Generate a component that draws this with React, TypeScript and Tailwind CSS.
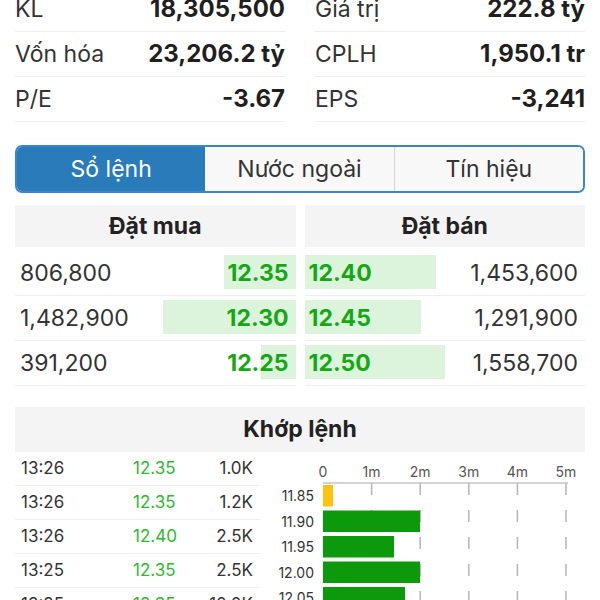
import React from "react";

const font = { fontFamily: "Inter, 'Noto Sans', sans-serif" };

const stats: [string, string][] = [
  ["KL", "18,305,500"],
  ["Giá trị", "222.8 tỷ"],
  ["Vốn hóa", "23,206.2 tỷ"],
  ["CPLH", "1,950.1 tr"],
  ["P/E", "-3.67"],
  ["EPS", "-3,241"],
];

const buys = [
  { vol: "806,800", price: "12.35", w: 72 },
  { vol: "1,482,900", price: "12.30", w: 133 },
  { vol: "391,200", price: "12.25", w: 35 },
];
const sells = [
  { vol: "1,453,600", price: "12.40", w: 131 },
  { vol: "1,291,900", price: "12.45", w: 116 },
  { vol: "1,558,700", price: "12.50", w: 140 },
];

const trades = [
  ["13:26", "12.35", "1.0K"],
  ["13:26", "12.35", "1.2K"],
  ["13:26", "12.40", "2.5K"],
  ["13:25", "12.35", "2.5K"],
  ["13:25", "12.35", "10.0K"],
];

const bars = [
  { label: "11.85", w: 10, color: "#ffc20e" },
  { label: "11.90", w: 97, color: "#0c990c" },
  { label: "11.95", w: 71, color: "#0c990c" },
  { label: "12.00", w: 97, color: "#0c990c" },
  { label: "12.05", w: 82, color: "#0c990c" },
];

function Chart() {
  const x0 = 63;
  const step = 48.6;
  const ticks = [0, 1, 2, 3, 4, 5];
  return (
    <svg width="325" height="148" viewBox="0 0 325 148">
      {ticks.map((t) => (
        <text
          key={t}
          x={x0 + t * step}
          y={25}
          textAnchor="middle"
          fontSize="14"
          fill="#555"
          fontFamily="Inter, sans-serif"
        >
          {t === 0 ? "0" : `${t}m`}
        </text>
      ))}
      {ticks.slice(1).map((t) => (
        <line
          key={t}
          x1={x0 + t * step}
          x2={x0 + t * step}
          y1={31}
          y2={148}
          stroke="#b5b5b5"
          strokeWidth="1.5"
          strokeDasharray="12 15"
        />
      ))}
      <line x1={x0} x2={x0 + 5 * step + 2} y1={31} y2={31} stroke="#c4c4c4" strokeWidth="1.5" />
      {bars.map((b, i) => {
        const top = 33 + i * 25.5;
        return (
          <g key={b.label}>
            <text
              x={54}
              y={top + 16}
              textAnchor="end"
              fontSize="14"
              fill="#333"
              fontFamily="Inter, sans-serif"
            >
              {b.label}
            </text>
            <rect x={x0} y={top} width={b.w} height={21.5} fill={b.color} />
          </g>
        );
      })}
    </svg>
  );
}

export default function App() {
  return (
    <div className="w-[600px] h-[600px] overflow-hidden bg-white text-[#222]" style={font}>
      <div className="-mt-[13px] grid grid-cols-2 gap-x-[30px] px-[15px]">
        {stats.map(([k, v]) => (
          <div key={k} className="flex h-[45px] items-center justify-between border-b border-[#eeeeee]">
            <span className="text-[23px] text-[#333]">{k}</span>
            <span className="text-[24px] font-bold text-[#1f1f1f]">{v}</span>
          </div>
        ))}
      </div>

      <div className="mx-[15px] mt-[23px] flex h-[48px] overflow-hidden rounded-[7px] border-2 border-[#3a86c6] text-[23px]">
        <div className="flex flex-1 items-center justify-center bg-[#2a7bb9] text-white">Sổ lệnh</div>
        <div className="flex flex-1 items-center justify-center bg-[#f8f8f8] text-[#333]">Nước ngoài</div>
        <div className="flex flex-1 items-center justify-center border-l border-[#d6d6d6] bg-[#f8f8f8] text-[#333]">Tín hiệu</div>
      </div>

      <div className="mt-[12px] grid grid-cols-2 gap-[9px] px-[15px]">
        <div>
          <div className="mb-[4px] flex h-[42px] items-center justify-center bg-[#f4f4f4] text-[23px] font-bold text-[#222]">
            Đặt mua
          </div>
          {buys.map((r) => (
            <div key={r.vol} className="relative flex h-[45px] items-center justify-between border-b border-[#eeeeee] pl-[5px] pr-[7px]">
              <div className="absolute right-0 top-[4px] h-[34px] bg-[#dcf3dc]" style={{ width: r.w }} />
              <span className="relative text-[23px] text-[#333]">{r.vol}</span>
              <span className="relative text-[23px] font-bold text-[#15a815]">{r.price}</span>
            </div>
          ))}
        </div>
        <div>
          <div className="mb-[4px] flex h-[42px] items-center justify-center bg-[#f4f4f4] text-[23px] font-bold text-[#222]">
            Đặt bán
          </div>
          {sells.map((r) => (
            <div key={r.vol} className="relative flex h-[45px] items-center justify-between border-b border-[#eeeeee] pl-[4px] pr-[7px]">
              <div className="absolute left-0 top-[4px] h-[34px] bg-[#dcf3dc]" style={{ width: r.w }} />
              <span className="relative text-[23px] font-bold text-[#15a815]">{r.price}</span>
              <span className="relative text-[23px] text-[#333]">{r.vol}</span>
            </div>
          ))}
        </div>
      </div>

      <div className="mx-[15px] mt-[21px] flex h-[45px] items-center justify-center bg-[#f4f4f4] text-[23px] font-bold text-[#222]">
        Khớp lệnh
      </div>

      <div className="flex pl-[15px]">
        <div className="w-[245px]">
          {trades.map((t, i) => (
            <div key={i} className="flex h-[34px] items-center border-b border-[#eeeeee] pl-[6px] pr-[7px] text-[17px]">
              <span className="w-[112px] text-[#333]">{t[0]}</span>
              <span className="w-[45px] text-[#2eb82e]">{t[1]}</span>
              <span className="flex-1 text-right text-[#333]">{t[2]}</span>
            </div>
          ))}
        </div>
        <Chart />
      </div>
    </div>
  );
}
